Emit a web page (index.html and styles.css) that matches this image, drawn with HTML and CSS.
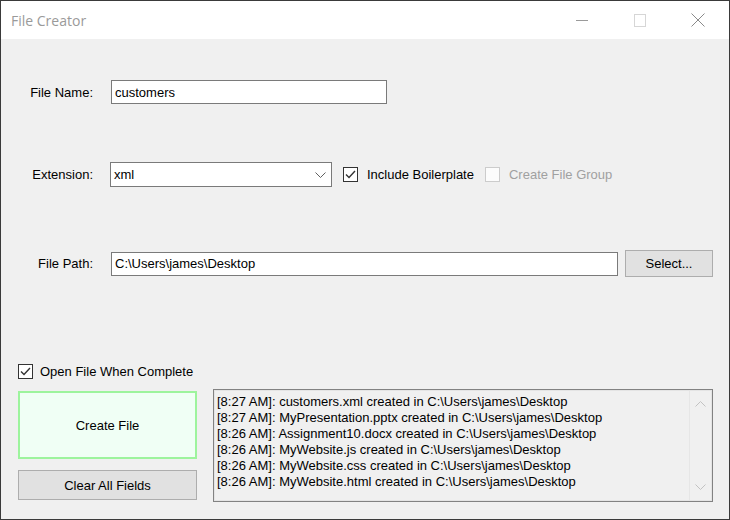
FILE: index.html
```html
<!DOCTYPE html>
<html>
<head>
<meta charset="utf-8">
<title>File Creator</title>
<link rel="stylesheet" href="styles.css">
</head>
<body>
<div class="window">
  <div class="titlebar">
    <span class="title">File Creator</span>
    <div class="caption">
      <span class="cap-btn"><svg width="12" height="12" viewBox="0 0 12 12"><path d="M0 6.5H12" stroke="#9a9a9a" stroke-width="1"/></svg></span>
      <span class="cap-btn"><svg width="12" height="13" viewBox="0 0 12 13"><rect x="0.5" y="0.5" width="11" height="12" fill="none" stroke="#d6d6d6" stroke-width="1"/></svg></span>
      <span class="cap-btn"><svg width="14" height="14" viewBox="0 0 14 14"><path d="M0.5 0.5L13.5 13.5M13.5 0.5L0.5 13.5" stroke="#8a8a8a" stroke-width="1"/></svg></span>
    </div>
  </div>
  <div class="client">
    <div class="row row-name">
      <span class="lbl">File Name:</span>
      <div class="textbox tb-name">customers</div>
    </div>
    <div class="row row-ext">
      <span class="lbl">Extension:</span>
      <div class="combo"><span>xml</span><svg class="chev" width="11" height="6" viewBox="0 0 11 6"><path d="M0.5 0.5L5.5 5.5L10.5 0.5" fill="none" stroke="#606060" stroke-width="1"/></svg></div>
      <label class="check ck-boiler"><span class="box"><svg width="13" height="13" viewBox="0 0 13 13"><path d="M2 6.5L5 9.5L11 3" fill="none" stroke="#333" stroke-width="1.4"/></svg></span>Include Boilerplate</label>
      <label class="check ck-group disabled"><span class="box"></span>Create File Group</label>
    </div>
    <div class="row row-path">
      <span class="lbl">File Path:</span>
      <div class="textbox tb-path">C:\Users\james\Desktop</div>
      <div class="button btn-select">Select...</div>
    </div>
    <label class="check ck-open"><span class="box"><svg width="13" height="13" viewBox="0 0 13 13"><path d="M2 6.5L5 9.5L11 3" fill="none" stroke="#333" stroke-width="1.4"/></svg></span>Open File When Complete</label>
    <div class="bottom">
      <div class="actions">
        <div class="button btn-create">Create File</div>
        <div class="button btn-clear">Clear All Fields</div>
      </div>
      <div class="listbox">
        <div class="log">
          <div>[8:27 AM]: customers.xml created in C:\Users\james\Desktop</div>
          <div>[8:27 AM]: MyPresentation.pptx created in C:\Users\james\Desktop</div>
          <div>[8:26 AM]: Assignment10.docx created in C:\Users\james\Desktop</div>
          <div>[8:26 AM]: MyWebsite.js created in C:\Users\james\Desktop</div>
          <div>[8:26 AM]: MyWebsite.css created in C:\Users\james\Desktop</div>
          <div>[8:26 AM]: MyWebsite.html created in C:\Users\james\Desktop</div>
        </div>
        <div class="vscroll">
          <svg width="11" height="6" viewBox="0 0 11 6"><path d="M0.5 5.5L5.5 0.5L10.5 5.5" fill="none" stroke="#c2c2c2" stroke-width="1"/></svg>
          <svg width="11" height="6" viewBox="0 0 11 6"><path d="M0.5 0.5L5.5 5.5L10.5 0.5" fill="none" stroke="#c2c2c2" stroke-width="1"/></svg>
        </div>
      </div>
    </div>
  </div>
</div>
</body>
</html>
```

FILE: styles.css
```css
html, body {
  margin: 0;
  padding: 0;
  background: #2b2b2b;
}
.window {
  width: 730px;
  height: 520px;
  box-sizing: border-box;
  border: 1px solid #3a3a3a;
  display: flex;
  flex-direction: column;
  overflow: hidden;
}
.titlebar {
  height: 38px;
  background: #ffffff;
  display: flex;
  align-items: center;
  flex: none;
}
.title {
  margin-left: 10px;
  font-family: "Open Sans", sans-serif;
  font-size: 14px;
  color: #9a9a9a;
}
.caption {
  margin-left: auto;
  display: flex;
  align-self: stretch;
  margin-right: 2px;
}
.cap-btn {
  width: 58px;
  display: flex;
  align-items: center;
  justify-content: center;
}
.cap-btn svg { display: block; }
.client {
  flex: 1;
  background: #f0f0f0;
  font-family: "Liberation Sans", Arial, sans-serif;
  font-size: 13px;
  color: #000;
  display: flex;
  flex-direction: column;
  align-items: flex-start;
}
.row {
  display: flex;
  align-items: center;
}
.lbl {
  width: 92px;
  text-align: right;
  flex: none;
}
.row-name { margin-top: 41px; height: 24px; }
.row-ext { margin-top: 58px; height: 25px; }
.row-path { margin-top: 63px; height: 27px; }
.textbox {
  box-sizing: border-box;
  height: 24px;
  border: 1px solid #7a7a7a;
  background: #fff;
  padding-left: 3px;
  display: flex;
  align-items: center;
  white-space: nowrap;
}
.tb-name { width: 276px; margin-left: 18px; }
.tb-path { width: 507px; margin-left: 18px; }
.combo {
  box-sizing: border-box;
  width: 222px;
  height: 25px;
  margin-left: 17px;
  border: 1px solid #7a7a7a;
  background: #fff;
  padding-left: 3px;
  padding-right: 5px;
  display: flex;
  align-items: center;
  justify-content: space-between;
}
.chev { display: block; }
.check {
  display: flex;
  align-items: center;
  white-space: nowrap;
}
.box {
  box-sizing: border-box;
  width: 15px;
  height: 15px;
  border: 1px solid #333;
  background: #fff;
  display: flex;
  align-items: center;
  justify-content: center;
  margin-right: 9px;
  flex: none;
}
.box svg { display: block; }
.ck-boiler { margin-left: 11px; }
.ck-group { margin-left: 11px; }
.disabled { color: #a0a0a0; }
.disabled .box { border-color: #cccccc; background: #fcfcfc; }
.ck-open { margin-top: 86px; margin-left: 17px; height: 16px; }
.ck-open .box { margin-right: 7px; }
.button {
  box-sizing: border-box;
  background: #e1e1e1;
  border: 1px solid #adadad;
  display: flex;
  align-items: center;
  justify-content: center;
  white-space: nowrap;
}
.btn-select { width: 88px; height: 27px; margin-left: 7px; }
.bottom {
  margin-top: 10px;
  margin-left: 17px;
  display: flex;
  align-items: flex-start;
}
.actions {
  margin-top: 2px;
  display: flex;
  flex-direction: column;
  gap: 11px;
}
.btn-create {
  width: 179px;
  height: 68px;
  border: 2px solid #9df49d;
  background: #f0fff5;
}
.btn-clear {
  width: 179px;
  height: 30px;
}
.listbox {
  box-sizing: border-box;
  width: 500px;
  height: 113px;
  margin-left: 16px;
  border: 1px solid #828282;
  box-shadow: inset 0 0 0 1px #e4e4e4;
  background: #f0f0f0;
  display: flex;
}
.log {
  flex: 1;
  padding: 4px 0 0 3px;
  line-height: 16px;
  white-space: nowrap;
  overflow: hidden;
}
.vscroll {
  width: 21px;
  margin: 1px 1px 1px 0;
  border-left: 1px solid #e6e6e6;
  background: #f0f0f0;
  display: flex;
  flex-direction: column;
  align-items: center;
  justify-content: space-between;
  padding: 10px 0 10px;
}
.vscroll svg { display: block; }
```
